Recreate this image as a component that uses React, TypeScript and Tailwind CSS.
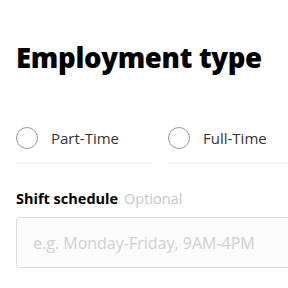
export default function App() {
  return (
    <div className="w-[288px] h-[288px] overflow-hidden bg-white" style={{ fontFamily: '"Open Sans", "Noto Sans", sans-serif' }}>
      <div className="pl-4 pt-[38px]">
        <h1 className="text-[27.5px] leading-[40px] font-extrabold text-black tracking-[-0.3px]">Employment type</h1>
        <div className="mt-[49px] flex gap-4">
          <div className="w-[136px] shrink-0 border-b border-[#f2f2f2] pb-[13px] flex items-center gap-[13px]">
            <span className="w-[22px] h-[22px] rounded-full border border-[#9a9a9a] shrink-0" />
            <span className="text-[15px] text-[#333]">Part-Time</span>
          </div>
          <div className="w-[136px] shrink-0 border-b border-[#f2f2f2] pb-[13px] flex items-center gap-[13px]">
            <span className="w-[22px] h-[22px] rounded-full border border-[#9a9a9a] shrink-0" />
            <span className="text-[15px] text-[#333]">Full-Time</span>
          </div>
        </div>
        <div className="mt-[24px] flex items-baseline gap-[6px]">
          <span className="text-[14.5px] font-bold text-black">Shift schedule</span>
          <span className="text-[14.5px] text-[#c8c8c8]">Optional</span>
        </div>
        <div className="mt-[8px] w-[300px] h-[51px] border border-[#dcdcdc] rounded-[3px] bg-[#fcfcfc] flex items-center pl-4">
          <span className="text-[16px] text-[#d0d0d0]">e.g. Monday-Friday, 9AM-4PM</span>
        </div>
      </div>
    </div>
  );
}
